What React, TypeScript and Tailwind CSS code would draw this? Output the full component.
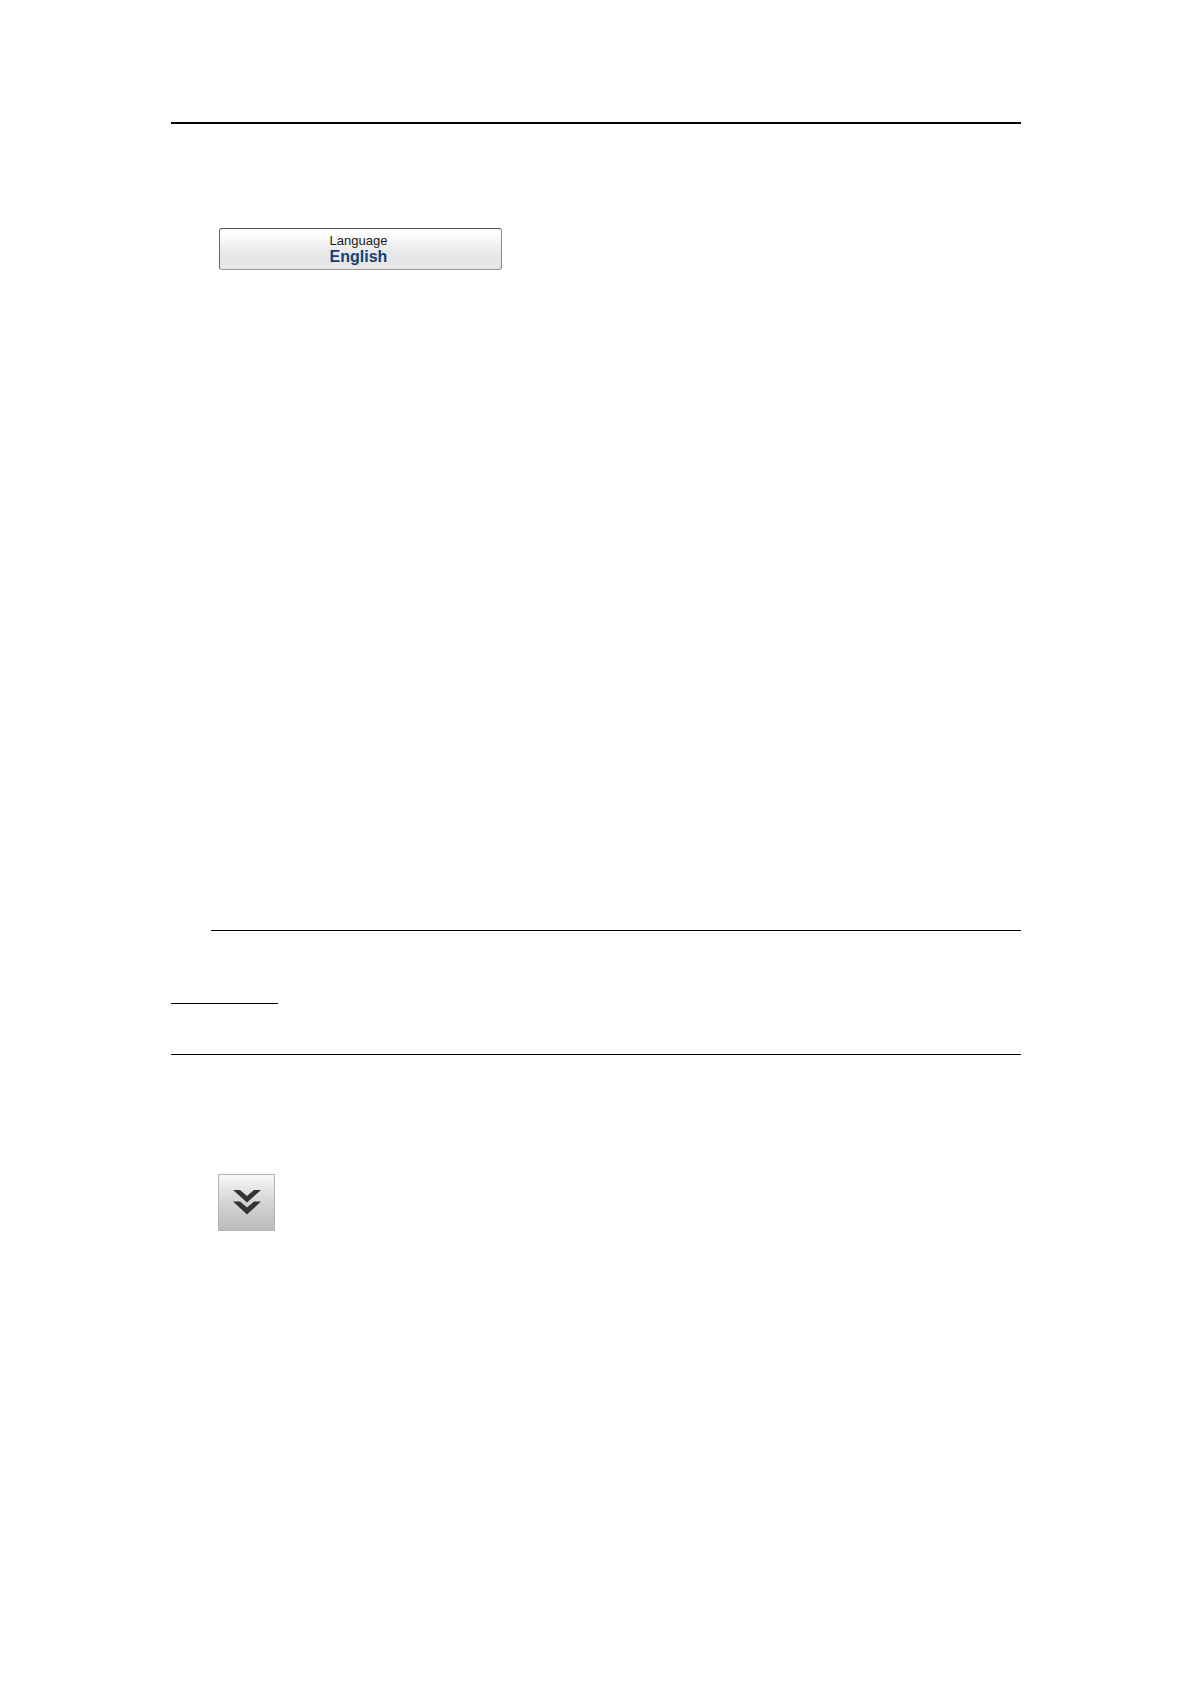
import { useState } from "react";

const languages = ["English", "Deutsch", "Suomi"];

function LanguageButton() {
  const [index, setIndex] = useState(0);

  return (
    <button
      type="button"
      onClick={() => setIndex((index + 1) % languages.length)}
      className="flex h-[42px] w-[283px] flex-col items-center justify-center rounded-[3px] border border-t-[#555555] border-r-[#8a8a8a] border-b-[#999999] border-l-[#666666] bg-linear-to-b from-white from-10% via-[#e8e8e8] via-60% to-[#e6e6e6] pr-1 pb-px"
    >
      <span className="text-[13px] leading-4 text-[#1a1a1a]">Language</span>
      <span className="text-base leading-4 font-bold text-[#123f73]">{languages[index]}</span>
    </button>
  );
}

function ScrollDownButton() {
  return (
    <button
      type="button"
      aria-label="Scroll down"
      className="flex size-[57px] justify-center border border-[#b4b4b4] bg-linear-to-b from-[#f8f8f8] via-[#d4d4d4] to-[#bcbcbc] pt-[15px]"
    >
      <svg width="28" height="25" viewBox="0 0 28 25" fill="#333333" aria-hidden="true">
        <path d="M0 0H7L14 6L21 0H28L14 12.500Z" />
        <path d="M0 11.500H7L14 17.500L21 11.500H28L14 24.500Z" />
      </svg>
    </button>
  );
}

export default function App() {
  return (
    <main className="min-h-screen bg-white pt-[122px] pr-[170px] pb-16 pl-[171px] font-['Liberation_Sans',Arial,sans-serif]">
      <hr className="border-t-2 border-black" />
      <div className="mt-[104px] pl-12">
        <LanguageButton />
      </div>

      <hr className="mt-[660px] ml-10 border-black" />
      <hr className="mt-[72px] w-[107px] border-black" />
      <hr className="mt-[50px] border-black" />

      <div className="mt-[119px] pl-[47px]">
        <ScrollDownButton />
      </div>
    </main>
  );
}
